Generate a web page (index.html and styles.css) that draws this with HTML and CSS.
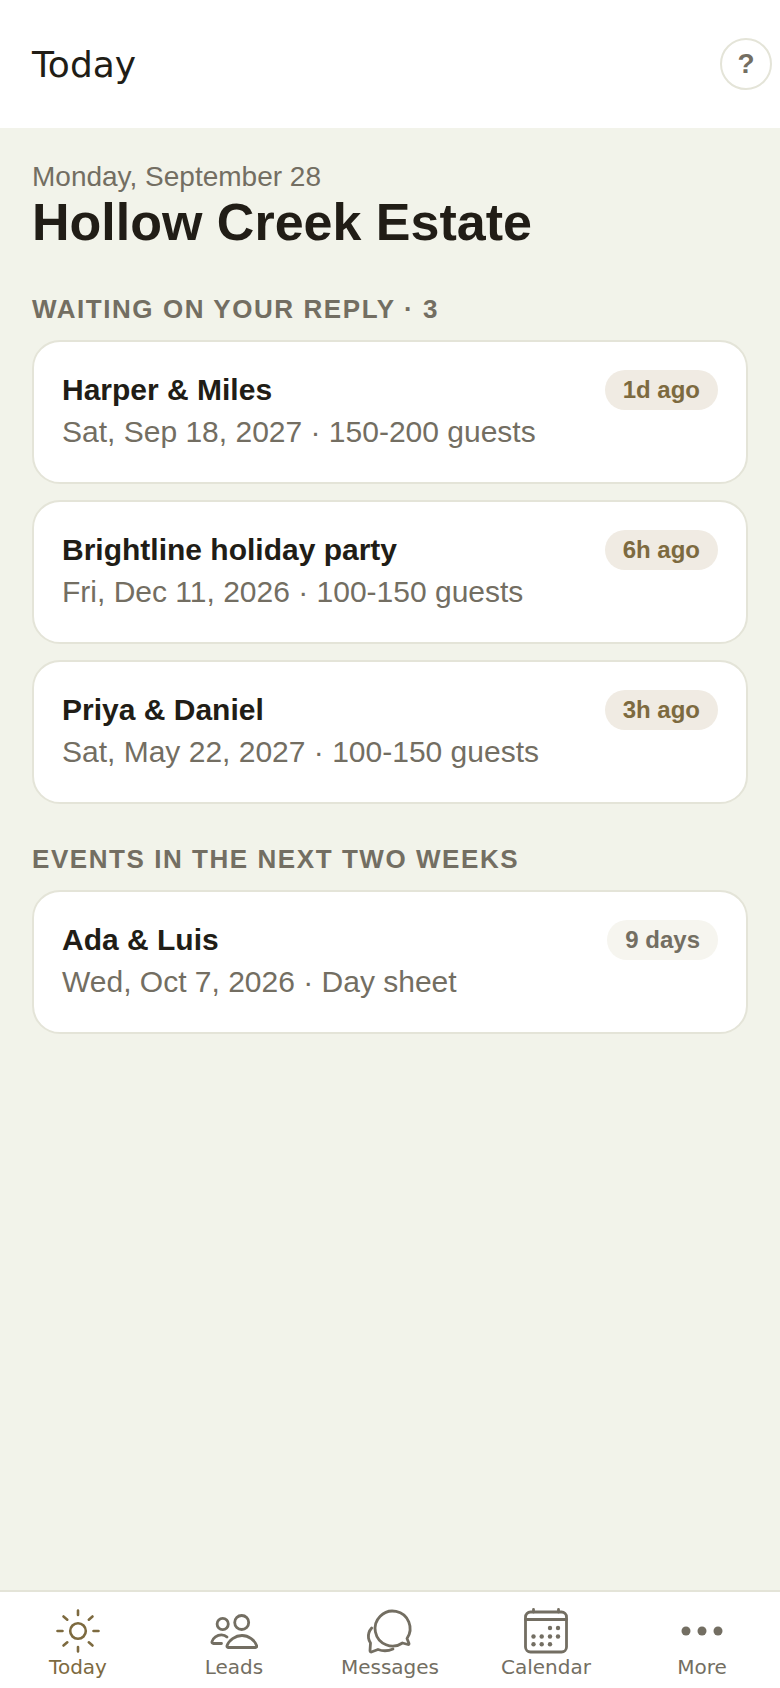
FILE: index.html
```html
<!DOCTYPE html>
<html lang="en">
<head>
    <meta charset="UTF-8">
    <meta name="viewport" content="width=device-width, initial-scale=1.0">
    <title>Today</title>
    <link rel="stylesheet" href="styles.css">
</head>
<body>
    <header class="top-bar">
        <h1 class="top-title">Today</h1>
        <button class="help-btn">?</button>
    </header>

    <main class="content">
        <p class="date">Monday, September 28</p>
        <h2 class="venue">Hollow Creek Estate</h2>

        <h3 class="section-label">WAITING ON YOUR REPLY · 3</h3>
        <div class="card-list">
            <div class="card">
                <div class="card-top">
                    <span class="card-name">Harper &amp; Miles</span>
                    <span class="pill">1d ago</span>
                </div>
                <div class="card-sub">Sat, Sep 18, 2027 · 150-200 guests</div>
            </div>
            <div class="card">
                <div class="card-top">
                    <span class="card-name">Brightline holiday party</span>
                    <span class="pill">6h ago</span>
                </div>
                <div class="card-sub">Fri, Dec 11, 2026 · 100-150 guests</div>
            </div>
            <div class="card">
                <div class="card-top">
                    <span class="card-name">Priya &amp; Daniel</span>
                    <span class="pill">3h ago</span>
                </div>
                <div class="card-sub">Sat, May 22, 2027 · 100-150 guests</div>
            </div>
        </div>

        <h3 class="section-label section-events">EVENTS IN THE NEXT TWO WEEKS</h3>
        <div class="card-list">
            <div class="card">
                <div class="card-top">
                    <span class="card-name">Ada &amp; Luis</span>
                    <span class="pill pill-muted">9 days</span>
                </div>
                <div class="card-sub">Wed, Oct 7, 2026 · Day sheet</div>
            </div>
        </div>
    </main>

    <nav class="tab-bar">
        <a class="tab tab-active">
            <svg class="tab-icon" viewBox="0 0 48 48" fill="none" stroke="currentColor" stroke-width="2.600" stroke-linecap="round">
                <circle cx="24" cy="24" r="7.800"/>
                <path d="M24 3.500v4.500M24 40v4.500M3.500 24h5M39.500 24h5M9.500 9.500l3.800 3.200M34.800 35.300l3.700 3.200M9.500 38.500l3.800-3.200M34.800 12.700l3.700-3.200"/>
            </svg>
            <span>Today</span>
        </a>
        <a class="tab">
            <svg class="tab-icon" viewBox="0 0 48 48" fill="none" stroke="currentColor" stroke-width="2.800" stroke-linecap="round" stroke-linejoin="round">
                <circle cx="12.700" cy="17" r="5.600"/>
                <circle cx="31.700" cy="15.500" r="7"/>
                <path d="M17 30c-1.500-1.500-3.500-2.200-5.500-2.200-4.500 0-8.500 3-9.500 6.700-.3 1.200.3 2 1.500 2h8"/>
                <path d="M18.500 40.500h27c1 0 1.500-.7 1.200-1.700-1.700-5.300-8-10.300-14.700-10.300-6.700 0-13.300 5-15 10.300-.3 1 .5 1.700 1.500 1.700z"/>
            </svg>
            <span>Leads</span>
        </a>
        <a class="tab">
            <svg class="tab-icon" viewBox="0 0 48 48" fill="none" stroke="currentColor" stroke-width="2.800" stroke-linecap="round" stroke-linejoin="round">
                <path d="M41 31.500A17.500 17.500 0 1 0 36.500 36l5.500 1.500c.8.200 1.200-.3 1-1z"/>
                <path d="M5.700 21c-2.700 3-3.700 6.500-3.200 10 .3 2 1 3.500 2 5l-.5 7.500c0 1.200.8 1.800 2 1.300l6-2.300c5 1.800 10.500 1.500 15-.5"/>
            </svg>
            <span>Messages</span>
        </a>
        <a class="tab">
            <svg class="tab-icon" viewBox="0 0 48 48" fill="none" stroke="currentColor" stroke-width="2.800" stroke-linecap="round">
                <rect x="3.500" y="5" width="41" height="40" rx="5"/>
                <path d="M3.500 12.500h41M11.500 2.500v2.500M36.500 2.500v2.500"/>
                <g fill="currentColor" stroke="none">
                    <circle cx="28" cy="21" r="2.200"/><circle cx="36" cy="21" r="2.200"/>
                    <circle cx="11.500" cy="29.500" r="2.200"/><circle cx="19.700" cy="29.500" r="2.200"/><circle cx="28" cy="29.500" r="2.200"/><circle cx="36" cy="29.500" r="2.200"/>
                    <circle cx="11.500" cy="37.300" r="2.200"/><circle cx="19.700" cy="37.300" r="2.200"/><circle cx="28" cy="37.300" r="2.200"/>
                </g>
            </svg>
            <span>Calendar</span>
        </a>
        <a class="tab">
            <svg class="tab-icon" viewBox="0 0 48 48" fill="currentColor">
                <circle cx="8" cy="24" r="4.500"/><circle cx="24" cy="24" r="4.500"/><circle cx="40" cy="24" r="4.500"/>
            </svg>
            <span>More</span>
        </a>
    </nav>
</body>
</html>
```

FILE: styles.css
```css
/* Page */
body {
    margin: 0;
    height: 1688px;
    display: flex;
    flex-direction: column;
    font-family: 'Liberation Sans', Arial, sans-serif;
    background-color: #f2f3ea;
    color: #211d16;
    overflow: hidden;
}

/* Top bar */
.top-bar {
    height: 128px;
    flex-shrink: 0;
    box-sizing: border-box;
    padding: 0 8px 0 32px;
    display: flex;
    justify-content: space-between;
    align-items: center;
    background: #fff;
}

.top-title {
    margin: 0;
    font-family: 'DejaVu Sans', sans-serif;
    font-size: 36px;
    font-weight: 400;
}

.help-btn {
    width: 52px;
    height: 52px;
    padding: 0;
    border: 2px solid #e4e4d8;
    border-radius: 50%;
    background: #fff;
    color: #736e62;
    font-family: 'Liberation Sans', Arial, sans-serif;
    font-size: 28px;
    font-weight: 700;
}

/* Main area */
.content {
    flex: 1;
    padding: 32px 32px 0;
}

.date {
    margin: 0;
    font-size: 28px;
    line-height: 34px;
    color: #736e62;
}

.venue {
    margin: 0;
    font-size: 52px;
    line-height: 56px;
    font-weight: 700;
}

.section-label {
    margin: 44px 0 16px;
    font-size: 26px;
    line-height: 30px;
    font-weight: 700;
    letter-spacing: 1.56px;
    color: #736e62;
}

.section-events {
    margin-top: 40px;
}

/* Cards */
.card-list {
    display: flex;
    flex-direction: column;
    gap: 16px;
}

.card {
    height: 144px;
    box-sizing: border-box;
    padding: 28px;
    background: #fff;
    border: 2px solid #e4e4d8;
    border-radius: 28px;
}

.card-top {
    display: flex;
    justify-content: space-between;
    align-items: center;
}

.card-name {
    font-size: 30px;
    font-weight: 700;
}

.card-sub {
    margin-top: 1px;
    font-size: 30px;
    line-height: 42px;
    color: #736e62;
}

.pill {
    height: 40px;
    padding: 0 18px;
    display: flex;
    align-items: center;
    border-radius: 20px;
    background: #f0ebe3;
    color: #7d6a3f;
    font-size: 24px;
    font-weight: 700;
}

.pill-muted {
    background: #f6f5ef;
    color: #736e62;
}

/* Bottom tabs */
.tab-bar {
    height: 98px;
    flex-shrink: 0;
    box-sizing: border-box;
    display: grid;
    grid-template-columns: repeat(5, 1fr);
    background: #fff;
    border-top: 2px solid #e4e4d8;
}

.tab {
    padding-top: 15px;
    display: flex;
    flex-direction: column;
    align-items: center;
    font-family: 'DejaVu Sans', sans-serif;
    font-size: 20px;
    line-height: 24px;
    color: #736e62;
}

.tab-active {
    color: #7d6a3f;
}

.tab-icon {
    width: 48px;
    height: 48px;
}
```
